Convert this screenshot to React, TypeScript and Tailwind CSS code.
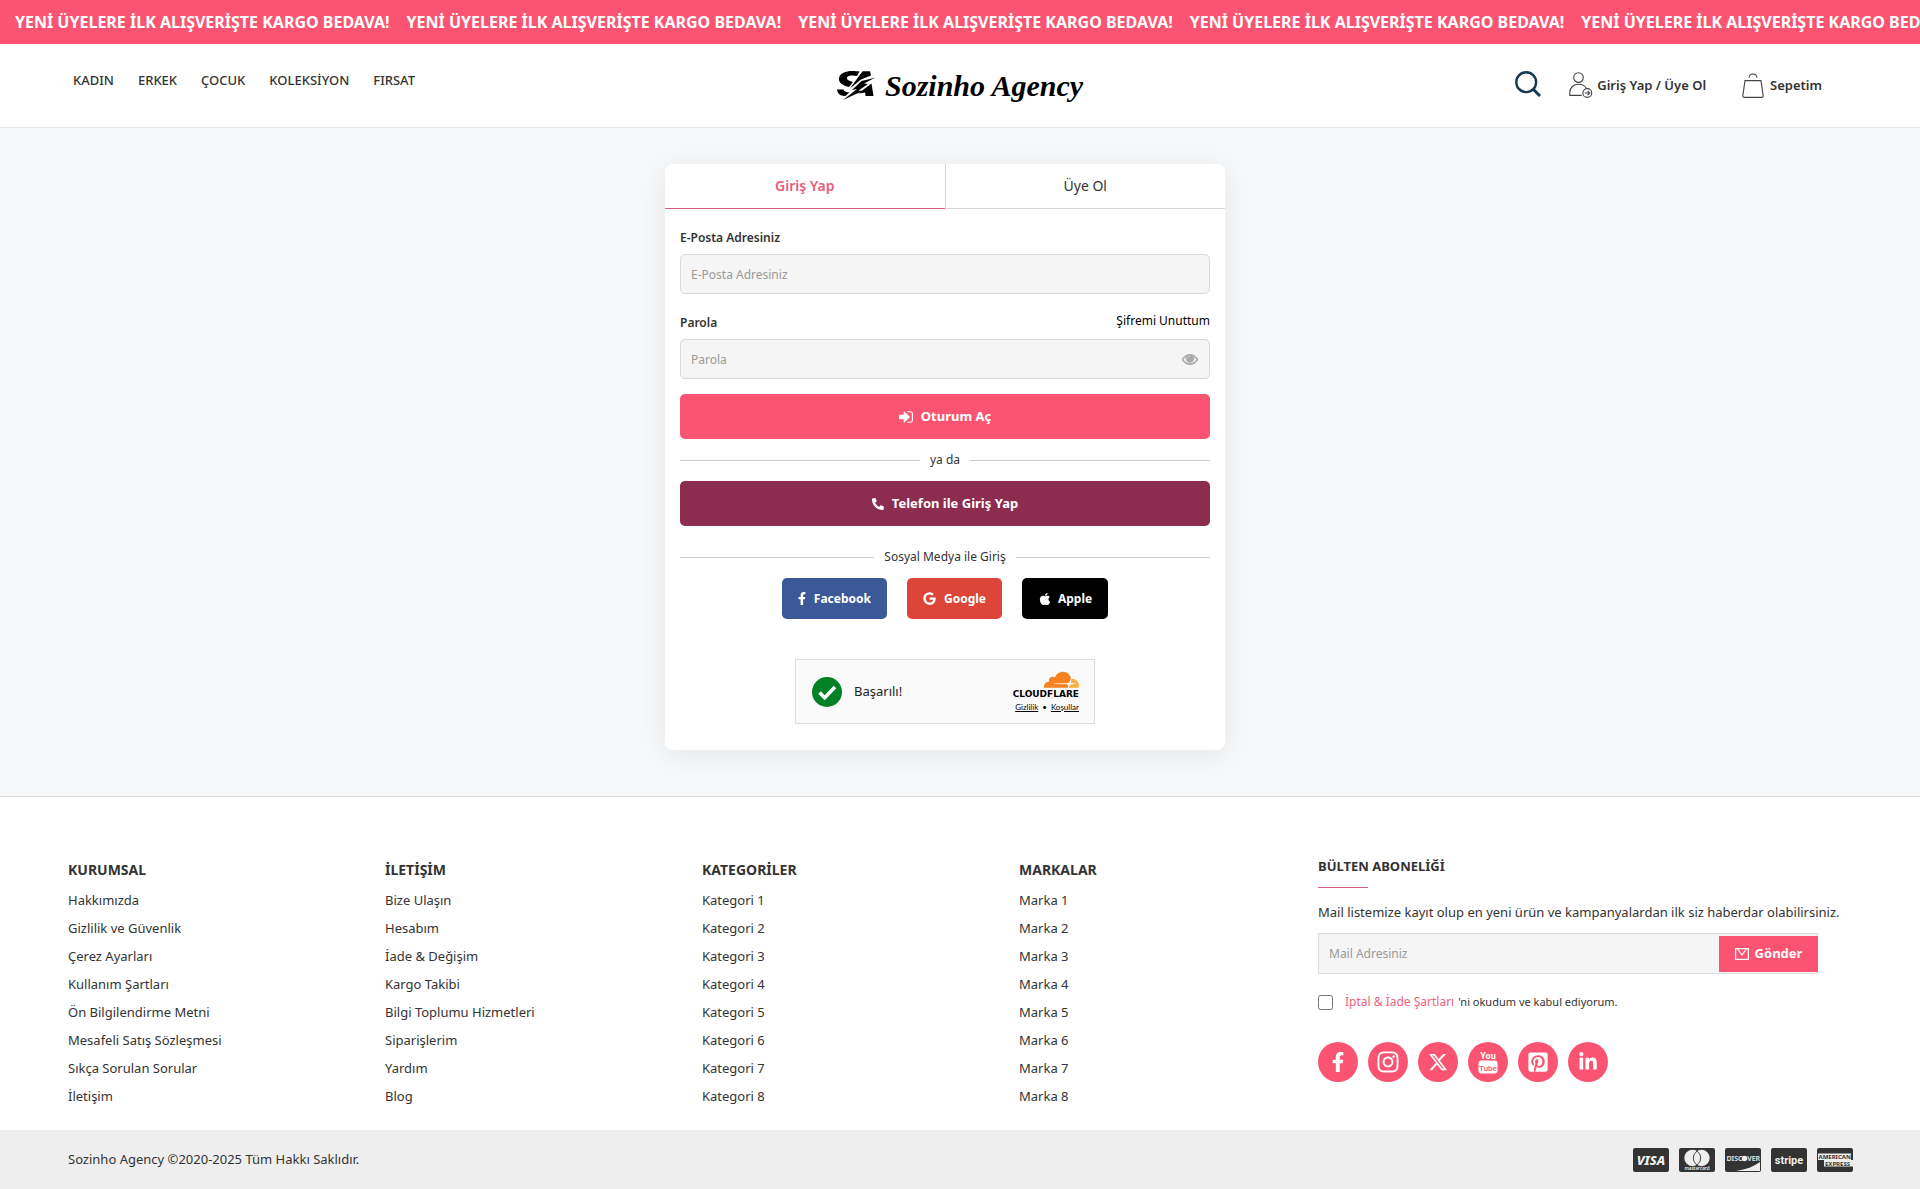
import { useState } from "react";
import type { ReactNode } from "react";
import {
  FaApple,
  FaFacebookF,
  FaGoogle,
  FaInstagram,
  FaLinkedinIn,
  FaPhoneAlt,
  FaPinterestSquare,
} from "react-icons/fa";
import { FaXTwitter } from "react-icons/fa6";

// ─── Data ──────────────────────────────────────────────────────────────────

const duyuru = "YENİ ÜYELERE İLK ALIŞVERİŞTE KARGO BEDAVA!";

const menu = ["KADIN", "ERKEK", "ÇOCUK", "KOLEKSİYON", "FIRSAT"];

const footerColumns = [
  {
    title: "KURUMSAL",
    links: [
      "Hakkımızda",
      "Gizlilik ve Güvenlik",
      "Çerez Ayarları",
      "Kullanım Şartları",
      "Ön Bilgilendirme Metni",
      "Mesafeli Satış Sözleşmesi",
      "Sıkça Sorulan Sorular",
      "İletişim",
    ],
  },
  {
    title: "İLETİŞİM",
    links: [
      "Bize Ulaşın",
      "Hesabım",
      "İade & Değişim",
      "Kargo Takibi",
      "Bilgi Toplumu Hizmetleri",
      "Siparişlerim",
      "Yardım",
      "Blog",
    ],
  },
  { title: "KATEGORİLER", links: [1, 2, 3, 4, 5, 6, 7, 8].map((n) => `Kategori ${n}`) },
  { title: "MARKALAR", links: [1, 2, 3, 4, 5, 6, 7, 8].map((n) => `Marka ${n}`) },
];

// ─── Icons ─────────────────────────────────────────────────────────────────

function LogoMark() {
  return (
    <svg viewBox="0 0 38 30" className="w-[38px] h-[30px]" fill="#000">
      <path d="M22.500 .5L20 5C17 4.300 11 4 10 6.500c-.5 2 1.500 3.200 6 4.500l-4 5C6 14.500 1.500 12 2 7.500 2.600 2 9 0 15 0c3 0 5.500 .2 7.500 .5z" />
      <path d="M0 18.500h6.500c.6 2 2.500 3 6 2.800l-4 3.700C3.500 25 .5 23 0 18.500z" />
      <path d="M25.500 .3H33l1 4.200-10 4-11 9z" />
      <path d="M38.500 6.500L24.500 10 15 19l5-1L6 29l19.500-9-4-.5L31 13l-4-.5z" />
      <path d="M34.500 12.500L36.500 25H28.500l-.3-3.500-7 1z" />
    </svg>
  );
}

function SearchIcon() {
  return (
    <svg viewBox="0 0 26 26" className="w-[26px] h-[26px]" fill="none" stroke="#17384f" strokeWidth="2.4">
      <circle cx="11.2" cy="11.2" r="9.9" />
      <path d="M18 18l7 7" strokeWidth="3" />
    </svg>
  );
}

function UserIcon() {
  return (
    <svg viewBox="0 0 24 27" className="w-6 h-[27px]" fill="none" stroke="#444" strokeWidth="1.1">
      <circle cx="9.5" cy="5.6" r="4.8" />
      <path d="M12.8 23.4H.8v-3.2c0-4.6 3.9-8 8.7-8 3.6 0 6.6 1.6 8 4.4" />
      <circle cx="18.3" cy="21" r="4.4" />
      <path d="M15.8 21h4.6M18.6 18.9l2.1 2.1-2.1 2.1" />
    </svg>
  );
}

function BagIcon() {
  return (
    <svg viewBox="0 0 22 26" className="w-[22px] h-[26px]" fill="none" stroke="#444" strokeWidth="1.1">
      <path d="M3 7.6h16l2.2 15.2c.1 1-.5 1.6-1.4 1.6H2.2c-.9 0-1.5-.6-1.4-1.6L3 7.6z" />
      <path d="M7 4.8C7.3 2.4 8.8 1 11 1s3.7 1.4 4 3.8" />
    </svg>
  );
}

function EyeIcon() {
  return (
    <svg viewBox="0 256 1792 1408" className="w-4 h-[13px]" fill="currentColor">
      <path d="M1664 960q-152-236-381-353 61 104 61 225 0 185-131.500 316.500t-316.500 131.500-316.500-131.500-131.500-316.500q0-121 61-225-229 117-381 353 133 205 333.500 326.500t434.500 121.500 434.500-121.500 333.500-326.500zm-720-384q0-20-14-34t-34-14q-125 0-214.500 89.500t-89.500 214.500q0 20 14 34t34 14 34-14 14-34q0-86 61-147t147-61q20 0 34-14t14-34zm848 384q0 34-20 69-140 230-376.500 368.500t-499.500 138.500-499.500-139-376.500-368q-20-35-20-69t20-69q140-229 376.500-368t499.500-139 499.500 139 376.500 368q20 35 20 69z" stroke="currentColor" strokeWidth="70" />
    </svg>
  );
}

function SignInIcon() {
  return (
    <svg viewBox="0 256 1536 1280" className="w-[14px] h-3" fill="currentColor">
      <path d="M1184 896q0 26-19 45l-544 544q-19 19-45 19t-45-19-19-45v-288h-448q-26 0-45-19t-19-45v-384q0-26 19-45t45-19h448v-288q0-26 19-45t45-19 45 19l544 544q19 19 19 45zm352-352v704q0 119-84.500 203.500t-203.500 84.500h-320q-13 0-22.500-9.500t-9.500-22.500q0-4-1-20t-.5-26.500 3-23.500 10-19.500 20.500-6.500h320q66 0 113-47t47-113v-704q0-66-47-113t-113-47h-312l-11.500-1-11.500-3-8-5.500-7-9-2-13.500q0-4-1-20t-.5-26.500 3-23.500 10-19.500 20.500-6.500h320q119 0 203.500 84.500t84.500 203.500z" />
    </svg>
  );
}

function MailIcon() {
  return (
    <svg viewBox="0 0 14 12" className="w-[14px] h-3" fill="none" stroke="currentColor" strokeWidth="1.2">
      <rect x=".6" y=".6" width="12.8" height="10.8" />
      <path d="M2.6 1l4.4 6 4.4-6" />
    </svg>
  );
}

function YoutubeIcon() {
  return (
    <svg viewBox="0 0 20 24" className="w-5 h-6" fill="#fff" fontFamily="Roboto, sans-serif">
      <text x="10" y="9" textAnchor="middle" fontSize="9" fontWeight="700">You</text>
      <rect x=".5" y="10.5" width="19" height="13" rx="3" />
      <text x="10" y="20.5" textAnchor="middle" fontSize="8" fontWeight="500" fill="#fb5472">Tube</text>
    </svg>
  );
}

function CloudIcon() {
  return (
    <svg viewBox="0 6.15 24 11.35" className="w-[35px] h-[17px]">
      <path fill="#f6821f" d="M16.5088 16.8447c.1475-.5068.0908-.9707-.1553-1.3154-.2246-.3164-.6045-.499-1.0615-.5205l-8.6592-.1123a.1559.1559 0 0 1-.1333-.0713c-.0283-.042-.0351-.0986-.021-.1553.0278-.084.1123-.1484.2036-.1562l8.7359-.1123c1.0351-.0489 2.1601-.8868 2.5537-1.9136l.499-1.3013c.0215-.0561.0293-.1128.0147-.168-.5625-2.5463-2.835-4.4453-5.5499-4.4453-2.5039 0-4.6284 1.6177-5.3876 3.8614-.4927-.3658-1.1187-.5625-1.794-.499-1.2026.119-2.1665 1.083-2.2861 2.2856-.0283.31-.0069.6128.0635.894C1.5683 13.171 0 14.7754 0 16.752c0 .1748.0142.3515.0352.5273.0141.083.0844.1475.1689.1475h15.9814c.0909 0 .1758-.0645.2032-.1553l.12-.4268z" />
      <path fill="#fbad41" d="M19.2656 11.2813c-.0771 0-.1611 0-.2383.0112-.0566 0-.1054.0415-.127.0976l-.3378 1.1744c-.1475.5068-.0918.9707.1543 1.3164.2256.3164.6055.498 1.0625.5195l1.8437.1133c.0557 0 .1055.0263.1329.0703.0283.043.0351.1074.0214.1562-.0283.084-.1132.1485-.204.1553l-1.921.1123c-1.041.0488-2.1582.8867-2.5527 1.914l-.1406.3585c-.0283.0713.0215.1416.0986.1416h6.5977c.0771 0 .1474-.0489.169-.126.1122-.4082.1757-.837.1757-1.2803 0-2.6025-2.125-4.727-4.7344-4.727" />
    </svg>
  );
}

function SuccessIcon() {
  return (
    <svg viewBox="0 0 30 30" className="w-[30px] h-[30px]">
      <circle cx="15" cy="15" r="15" fill="#038127" />
      <path d="M7.5 15.5l5.2 5.2L23 10" fill="none" stroke="#fff" strokeWidth="3.6" />
    </svg>
  );
}

function PayCard({ label, children }: { label: string; children: ReactNode }) {
  return (
    <svg viewBox="0 0 36 24" role="img" aria-label={label} className="w-9 h-6" fill="#eee" fontFamily="Noto Sans, sans-serif">
      <rect width="36" height="24" rx="2" fill="#333" />
      {children}
    </svg>
  );
}

const socials = [
  { name: "Facebook", icon: <FaFacebookF className="text-[20px]" /> },
  { name: "Instagram", icon: <FaInstagram className="text-[24px]" /> },
  { name: "X", icon: <FaXTwitter className="text-[20px]" /> },
  { name: "YouTube", icon: <YoutubeIcon /> },
  { name: "Pinterest", icon: <FaPinterestSquare className="text-[22px]" /> },
  { name: "LinkedIn", icon: <FaLinkedinIn className="text-[20px]" /> },
];

// ─── Header ────────────────────────────────────────────────────────────────

function Header() {
  return (
    <header>
      <div className="h-11 bg-[#fb5472] text-white flex items-center gap-[17px] pl-[15px] overflow-hidden whitespace-nowrap">
        {[1, 2, 3, 4, 5].map((n) => (
          <p key={n} className="shrink-0 text-base font-bold">{duyuru}</p>
        ))}
      </div>
      <div className="h-[84px] border-b border-[#e6e6e6] bg-white grid grid-cols-[1fr_auto_1fr] items-center">
        <nav className="flex gap-6 pl-[73px] pb-2.5 text-[13px] font-medium">
          {menu.map((item) => (
            <a key={item} href="#">{item}</a>
          ))}
        </nav>
        <a href="#" className="flex items-center gap-2.5 text-black">
          <LogoMark />
          <span className="font-['Liberation_Serif',serif] text-[30px] leading-9 font-bold italic">Sozinho Agency</span>
        </a>
        <div className="flex items-center justify-end pr-[98px] text-[13px] font-semibold">
          <button type="button" aria-label="Ara" className="mr-7 pb-1"><SearchIcon /></button>
          <a href="#" className="flex items-center gap-1 mr-9"><UserIcon />Giriş Yap / Üye Ol</a>
          <a href="#" className="flex items-center gap-1.5"><BagIcon />Sepetim</a>
        </div>
      </div>
    </header>
  );
}

// ─── Login ─────────────────────────────────────────────────────────────────

function Divider({ text }: { text: string }) {
  return (
    <div className="h-[42px] flex items-center gap-2.5 text-xs">
      <span className="flex-1 h-px bg-[#ccc]" />
      {text}
      <span className="flex-1 h-px bg-[#ccc]" />
    </div>
  );
}

function LoginCard() {
  const [tab, setTab] = useState("giris");
  const [showPassword, setShowPassword] = useState(false);

  const tabCls = (active: boolean) =>
    active
      ? "flex-1 h-[45px] text-sm border-b border-[#d6607e] text-[#ea5b7a] font-semibold"
      : "flex-1 h-[45px] text-sm border-b border-[#d8d8d8]";

  return (
    <div className="w-[560px] pb-[26px] bg-white rounded-lg overflow-hidden shadow-[0_5px_30px_rgba(0,0,0,0.08)]">
      <div className="flex">
        <button type="button" onClick={() => setTab("giris")} className={tabCls(tab === "giris")}>Giriş Yap</button>
        <span className="w-px bg-[#d8d8d8]" />
        <button type="button" onClick={() => setTab("uye")} className={tabCls(tab === "uye")}>Üye Ol</button>
      </div>

      <form className="px-[15px] pt-[19px] text-xs" onSubmit={(e) => e.preventDefault()}>
        <label htmlFor="email" className="block mb-1.5 leading-5 font-semibold">E-Posta Adresiniz</label>
        <input id="email" type="email" placeholder="E-Posta Adresiniz"
          className="block w-full h-10 px-2.5 bg-[#f5f5f5] border border-[#d8d8d8] rounded-[5px] placeholder-[#999] outline-none" />

        <div className="flex justify-between mt-[19px] mb-1.5 leading-5">
          <label htmlFor="password" className="font-semibold">Parola</label>
          <a href="#" className="leading-4 text-black">Şifremi Unuttum</a>
        </div>
        <div className="flex items-center h-10 pr-[11px] bg-[#f5f5f5] border border-[#d8d8d8] rounded-[5px]">
          <input id="password" type={showPassword ? "text" : "password"} placeholder="Parola"
            className="flex-1 h-full px-2.5 bg-transparent placeholder-[#999] outline-none" />
          <button type="button" aria-label="Parolayı göster" onClick={() => setShowPassword(!showPassword)} className="text-[#aaa]"><EyeIcon /></button>
        </div>

        <button type="submit" className="flex items-center justify-center gap-2 w-full h-[45px] mt-[15px] rounded-[5px] bg-[#fb5472] text-white text-[13px] font-bold">
          <SignInIcon />Oturum Aç
        </button>
        <Divider text="ya da" />
        <button type="button" className="flex items-center justify-center gap-2 w-full h-[45px] mb-2.5 rounded-[5px] bg-[#8c2d50] text-white text-[13px] font-bold">
          <FaPhoneAlt className="text-xs" />Telefon ile Giriş Yap
        </button>
        <Divider text="Sosyal Medya ile Giriş" />

        <div className="flex justify-center gap-5 text-white font-bold">
          <button type="button" className="flex items-center gap-2 h-[41px] px-4 rounded-[5px] bg-[#3b5998]"><FaFacebookF className="w-2 h-[13px]" />Facebook</button>
          <button type="button" className="flex items-center gap-2 h-[41px] px-4 rounded-[5px] bg-[#dd4538]"><FaGoogle className="text-[13px]" />Google</button>
          <button type="button" className="flex items-center gap-1.5 h-[41px] px-4 rounded-[5px] bg-black"><FaApple className="text-sm" />Apple</button>
        </div>

        <div className="flex items-center w-[300px] h-[65px] mt-10 mx-auto pl-4 pr-[15px] bg-[#fafafa] border border-[#ddd]">
          <SuccessIcon />
          <p className="ml-3 text-[13px] text-[#222]">Başarılı!</p>
          <div className="ml-auto flex flex-col items-end text-black">
            <CloudIcon />
            <span className="font-['DejaVu_Sans',sans-serif] text-[9px] leading-[13px] font-bold">CLOUDFLARE</span>
            <div className="flex gap-1 font-['Lato',sans-serif] text-[8px] leading-3">
              <a href="#" className="underline">Gizlilik</a>•<a href="#" className="underline">Koşullar</a>
            </div>
          </div>
        </div>
      </form>
    </div>
  );
}

// ─── Footer ────────────────────────────────────────────────────────────────

function Newsletter() {
  return (
    <div>
      <h3 className="text-[13px] leading-6 font-bold">BÜLTEN ABONELİĞİ</h3>
      <div className="w-[50px] h-px mt-[9px] bg-[#d6607e]" />
      <p className="mt-3 text-[13px] leading-6 whitespace-nowrap">Mail listemize kayıt olup en yeni ürün ve kampanyalardan ilk siz haberdar olabilirsiniz.</p>
      <form onSubmit={(e) => e.preventDefault()}>
        <div className="flex items-center w-[500px] h-[41px] mt-[9px] bg-[#f5f5f5] border border-[#ddd]">
          <input type="email" aria-label="Mail Adresiniz" placeholder="Mail Adresiniz" className="flex-1 h-full px-2.5 text-xs bg-transparent placeholder-[#999] outline-none" />
          <button type="submit" className="flex items-center justify-center gap-1.5 w-[99px] h-9 -mr-px bg-[#fb5472] text-white text-[13px] font-bold"><MailIcon />Gönder</button>
        </div>
        <div className="flex items-center h-6 mt-4">
          <input id="sartlar" type="checkbox" className="w-[15px] h-[15px] mr-3 accent-[#fb5472]" />
          <label htmlFor="sartlar" className="text-[11px]"><a href="#" className="mr-1 text-xs text-[#ee6280]">İptal & İade Şartları</a>'ni okudum ve kabul ediyorum.</label>
        </div>
      </form>
      <div className="flex gap-2.5 mt-7">
        {socials.map((s) => (
          <a key={s.name} href="#" aria-label={s.name} className="flex items-center justify-center w-10 h-10 rounded-full bg-[#fb5472] text-white">{s.icon}</a>
        ))}
      </div>
    </div>
  );
}

function Footer() {
  return (
    <footer className="bg-white border-t border-[#ddd]">
      <div className="grid grid-cols-[317fr_317fr_317fr_299fr_535fr] pl-[68px] pr-[67px] pt-[57px] pb-5">
        {footerColumns.map((col) => (
          <div key={col.title} className="pt-0.5">
            <h3 className="mb-0.5 text-sm leading-7 font-bold">{col.title}</h3>
            <ul className="text-[13px] leading-7">
              {col.links.map((link) => (
                <li key={link}><a href="#">{link}</a></li>
              ))}
            </ul>
          </div>
        ))}
        <Newsletter />
      </div>
      <div className="flex items-center justify-between h-[59px] pl-[68px] pr-[67px] bg-[#eee]">
        <p className="text-[13px]">Sozinho Agency ©2020-2025 Tüm Hakkı Saklıdır.</p>
        <div className="flex gap-2.5">
          <PayCard label="Visa">
            <text x="18" y="17" textAnchor="middle" fontSize="13" fontWeight="800" fontStyle="italic">VISA</text>
          </PayCard>
          <PayCard label="Mastercard">
            <circle cx="13.5" cy="10" r="8.2" />
            <circle cx="22.5" cy="10" r="8.2" />
            <path d="M18 3.200a8.200 8.200 0 0 1 0 13.600a8.200 8.200 0 0 1 0-13.600z" fill="none" stroke="#333" strokeWidth=".9" />
            <text x="18" y="22" textAnchor="middle" fontSize="4.5" fontWeight="600">mastercard</text>
          </PayCard>
          <PayCard label="Discover">
            <text x="1.5" y="13" fontSize="7" fontWeight="600">DISC</text>
            <circle cx="19.500" cy="10.5" r="2.8" />
            <text x="22.3" y="13" fontSize="7" fontWeight="600">VER</text>
            <path d="M35 14v9H11c10-1.500 18-4.500 24-9z" />
          </PayCard>
          <PayCard label="Stripe">
            <text x="18" y="15.5" textAnchor="middle" fontSize="11" fontWeight="700" fontFamily="Roboto, sans-serif">stripe</text>
          </PayCard>
          <PayCard label="American Express">
            <path d="M1 5.5h33v6.500h2v6.500H7V12H1z" />
            <text x="1.5" y="11" fontSize="6" fontWeight="700" fill="#333">AMERICAN</text>
            <text x="8" y="17.5" fontSize="6" fontWeight="700" fill="#333">EXPRESS</text>
          </PayCard>
        </div>
      </div>
    </footer>
  );
}

// ─── Page ──────────────────────────────────────────────────────────────────

export default function App() {
  return (
    <div className="min-h-screen bg-white text-[#333] font-['Noto_Sans',sans-serif]">
      <Header />
      <main className="flex justify-center pt-9 pb-[46px] pr-[30px] bg-[#f6f8fa]">
        <LoginCard />
      </main>
      <Footer />
    </div>
  );
}
